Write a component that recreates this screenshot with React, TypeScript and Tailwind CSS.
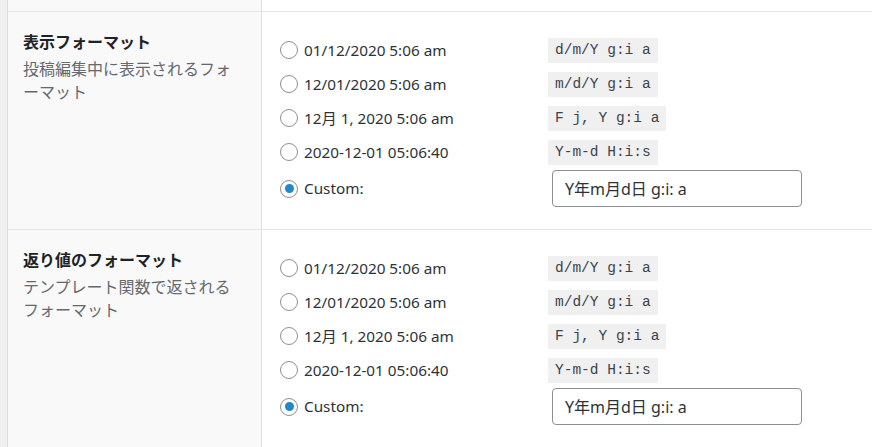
import React from "react";

interface Choice {
  label: string;
  code: string;
}

const choices: Choice[] = [
  { label: "01/12/2020 5:06 am", code: "d/m/Y g:i a" },
  { label: "12/01/2020 5:06 am", code: "m/d/Y g:i a" },
  { label: "12月 1, 2020 5:06 am", code: "F j, Y g:i a" },
  { label: "2020-12-01 05:06:40", code: "Y-m-d H:i:s" },
];

function Radio({ checked }: { checked?: boolean }) {
  return (
    <span className="flex h-[18px] w-[18px] shrink-0 items-center justify-center rounded-full border border-[#8c8f94] bg-white">
      {checked && <span className="h-[9px] w-[9px] rounded-full bg-[#2188c9]" />}
    </span>
  );
}

function FormatSection({ title, desc }: { title: string; desc: string }) {
  return (
    <div className="flex border-t border-[#e5e5e5]">
      <div className="w-[254px] shrink-0 border-r border-[#e1e1e1] bg-[#f9f9f9] pl-[15px] pr-[24px] pt-[19px]">
        <div className="text-[16px] font-bold leading-[23px] text-[#1d2327]">{title}</div>
        <div className="mt-[4px] text-[16px] leading-[23px] text-[#646970] [line-break:anywhere]">{desc}</div>
      </div>
      <div className="flex-1 bg-white pb-[21px] pl-[18px] pt-[21px]">
        {choices.map((c) => (
          <div key={c.code} className="flex h-[34px] items-center">
            <div className="flex w-[268px] items-center gap-[6px]">
              <Radio />
              <span className="text-[15.3px] text-[#2c3338]">{c.label}</span>
            </div>
            <code className="bg-[#f0f0f1] px-[7px] py-[3px] font-['Liberation_Mono',monospace] text-[14.5px] leading-[19px] text-[#3c434a]">
              {c.code}
            </code>
          </div>
        ))}
        <div className="flex h-[39px] items-center">
          <div className="flex w-[272px] items-center gap-[6px]">
            <Radio checked />
            <span className="text-[15.3px] text-[#2c3338]">Custom:</span>
          </div>
          <div className="flex h-[37px] w-[250px] items-center rounded-[4px] border border-[#8c8f94] bg-white px-[12px] text-[16px] text-[#2c3338]">
            Y年m月d日 g:i: a
          </div>
        </div>
      </div>
    </div>
  );
}

export default function App() {
  return (
    <div
      className="flex h-[447px] w-[872px] overflow-hidden bg-[#f0f0f1]"
      style={{ fontFamily: '"Noto Sans", "Noto Sans CJK JP", sans-serif' }}
    >
      <div className="w-[8px] shrink-0 border-r border-[#dcdcde] bg-[#f0f0f1]" />
      <div className="flex flex-1 flex-col">
        <div className="flex h-[11px]">
          <div className="w-[254px] shrink-0 border-r border-[#e1e1e1] bg-[#f9f9f9]" />
          <div className="flex-1 bg-white" />
        </div>
        <FormatSection title="表示フォーマット" desc="投稿編集中に表示されるフォーマット" />
        <FormatSection title="返り値のフォーマット" desc="テンプレート関数で返されるフォーマット" />
        <div className="flex flex-1">
          <div className="w-[254px] shrink-0 border-r border-[#e1e1e1] bg-[#f9f9f9]" />
          <div className="flex-1 bg-white" />
        </div>
      </div>
    </div>
  );
}
